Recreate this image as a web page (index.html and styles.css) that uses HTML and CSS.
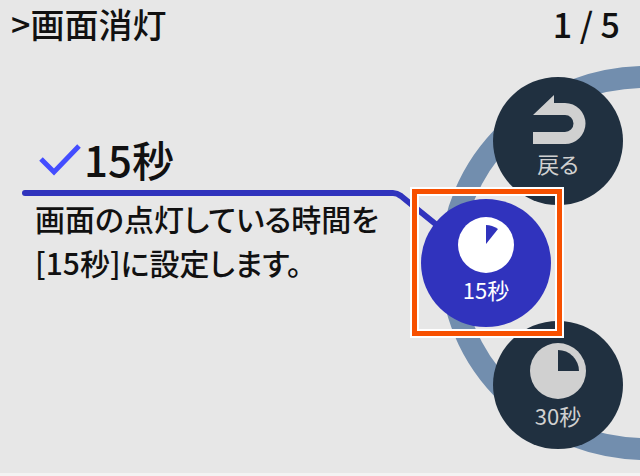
FILE: index.html
```
<!DOCTYPE html>
<html lang="ja">
<head>
  <meta charset="UTF-8">
  <meta name="viewport" content="width=device-width, initial-scale=1.0">
  <title>画面消灯</title>
  <link rel="stylesheet" href="styles.css">
</head>

<body>
  <div class="screen">
    <header class="header">
      <h1>&gt;画面消灯</h1>
      <span class="page">1 / 5</span>
    </header>

    <main class="content">
      <section class="detail">
        <h2>
          <svg class="check" viewBox="0 0 44 34" aria-hidden="true">
            <path d="M3 17 L16 30 L41 4"/>
          </svg>
          15秒
        </h2>
        <div class="line">
          <!-- Connector to the selected button -->
          <svg class="connector" viewBox="0 0 60 50" aria-hidden="true">
            <path d="M0 3 H10 Q14 3 18 6 L55 36"/>
          </svg>
        </div>
        <p>画面の点灯している時間を<br>[15秒]に設定します。</p>
      </section>

      <nav class="dial">
        <svg class="ring" viewBox="0 0 414 394" aria-hidden="true">
          <ellipse cx="207" cy="197" rx="196" ry="186"/>
        </svg>
        <button type="button" class="item upper">
          <svg class="icon" viewBox="0 0 56 56" aria-hidden="true">
            <path fill="currentColor" d="M3 24 L24 4 V12 H35 A20 20 0 0 1 35 53 H3 V41 H35 A8 8 0 0 0 35 24 Z"/>
          </svg>
          戻る
        </button>
        <button type="button" class="item selected">
          <svg class="icon" viewBox="0 0 56 56" aria-hidden="true">
            <circle fill="currentColor" cx="28" cy="28" r="28"/>
            <path class="hand" d="M28 27 V8 Q34 8 40 12 Z"/>
          </svg>
          15秒
        </button>
        <button type="button" class="item lower">
          <svg class="icon" viewBox="0 0 56 56" aria-hidden="true">
            <circle fill="currentColor" cx="28" cy="28" r="28"/>
            <path class="hand" d="M28 28 V7 A21 21 0 0 1 49 28 Z"/>
          </svg>
          30秒
        </button>
      </nav>
    </main>
  </div>
</body>
</html>
```

FILE: styles.css
```
* {
  box-sizing: border-box;
}

body {
  margin: 0;
  background-color: #e7e7e7;
  color: #111;
  font-family: "Noto Sans CJK JP", sans-serif;
  font-weight: 500;
  font-feature-settings: "palt";
}

.screen {
  position: relative;
  min-height: 100vh;
  overflow: hidden;
  border-bottom: 3px solid #f3f3f3;
}

.header {
  display: flex;
  justify-content: space-between;
  align-items: center;
  height: 48px;
  padding: 0 20px 0 11px;
  font-size: 34px;
  line-height: 48px;
}

h1,
h2,
p {
  margin: 0;
  font-weight: 500;
}

h1 {
  font-size: 34px;
}

.content {
  display: flex;
}

.detail {
  flex: 1;
  min-width: 0;
  padding: 82px 0 0 22px;
}

h2 {
  display: flex;
  align-items: center;
  gap: 2px;
  height: 60px;
  padding: 0 0 2px 16px;
  font-size: 42px;
  line-height: 56px;
}

.check {
  width: 44px;
  height: 34px;
  fill: none;
  stroke: #444dff;
  stroke-width: 5;
}

.line {
  position: relative;
  height: 6px;
  margin-right: 28px;
  border-radius: 3px;
  background-color: #3033bd;
}

.connector {
  position: absolute;
  top: 0;
  left: calc(100% - 10px);
  width: 60px;
  height: 50px;
  fill: none;
  stroke: #3033bd;
  stroke-width: 6;
}

p {
  padding-left: 13px;
  font-size: 30px;
  line-height: 44px;
  white-space: nowrap;
}

.dial {
  position: relative;
  display: flex;
  flex-direction: column;
  align-items: flex-end;
  width: 219px;
  padding: 29px 17px 0 0;
}

/* Ring runs off the right edge, behind the buttons */
.ring {
  position: absolute;
  top: 18px;
  left: 19px;
  width: 414px;
  height: 394px;
  fill: none;
  stroke: #728eae;
  stroke-width: 22;
}

.item {
  position: relative;
  display: flex;
  flex-direction: column;
  align-items: center;
  width: 130px;
  height: 128px;
  margin-bottom: -6px;
  padding: 18px 0 0;
  border: none;
  border-radius: 50%;
  background-color: #203040;
  color: #d0d0d0;
  font: inherit;
  font-size: 22px;
  font-weight: 400;
  line-height: 32px;
  cursor: pointer;
}

.upper {
  padding-top: 14px;
}

.lower {
  padding-top: 22px;
}

.icon {
  width: 56px;
  height: 56px;
}

.hand {
  fill: #203040;
}

.selected {
  z-index: 1;
  align-self: flex-start;
  background-color: #3033bd;
  color: #fff;
}

.selected .hand {
  fill: #3033bd;
}

.selected::after {
  content: "";
  position: absolute;
  inset: -10px -11px -9px -9px;
  border: 5px solid #f75000;
  box-shadow: 0 0 0 2px #fff, inset 0 0 0 2px #fff;
}
```
